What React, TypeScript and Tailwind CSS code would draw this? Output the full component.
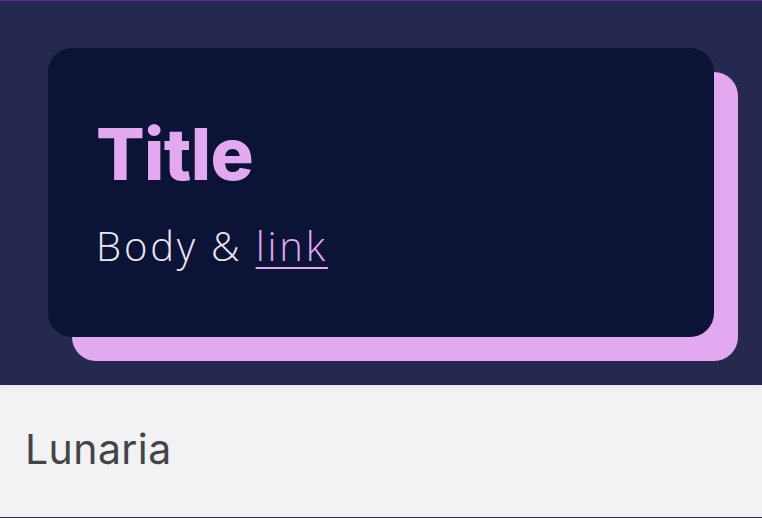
export default function App() {
  return (
    <div className="flex h-[518px] w-[762px] flex-col border-t border-b border-t-[#5a2b9c] border-b-[#3b2a63] bg-[#f2f2f4]">
      <div className="relative z-10 bg-[#25284f] pt-[47px] pb-12 pl-12 shadow-[0_2px_6px_rgba(0,0,0,0.05)]">
        <div className="h-[289px] w-[666px] rounded-3xl bg-[#0b1336] px-12 pt-[70px] shadow-[24px_24px_0_#e2a8f0]">
          <h1 className="font-['Inter',sans-serif] text-[72px] font-extrabold leading-none tracking-[-0.01em] text-[#e2a8f0]">
            Title
          </h1>
          <p className="mt-[36px] font-['Open_Sans',sans-serif] text-[40px] font-light leading-none tracking-[0.07em] text-[#ece6f2]">
            Body &amp;{" "}
            <a href="#" className="text-[#e2a8f0] underline decoration-2 underline-offset-[6px]">
              link
            </a>
          </p>
        </div>
      </div>
      <div className="flex flex-1 items-center px-[25px] pb-[2px]">
        <span className="font-['Inter',sans-serif] text-[41px] tracking-[0.01em] text-[#444448]">Lunaria</span>
      </div>
    </div>
  );
}
